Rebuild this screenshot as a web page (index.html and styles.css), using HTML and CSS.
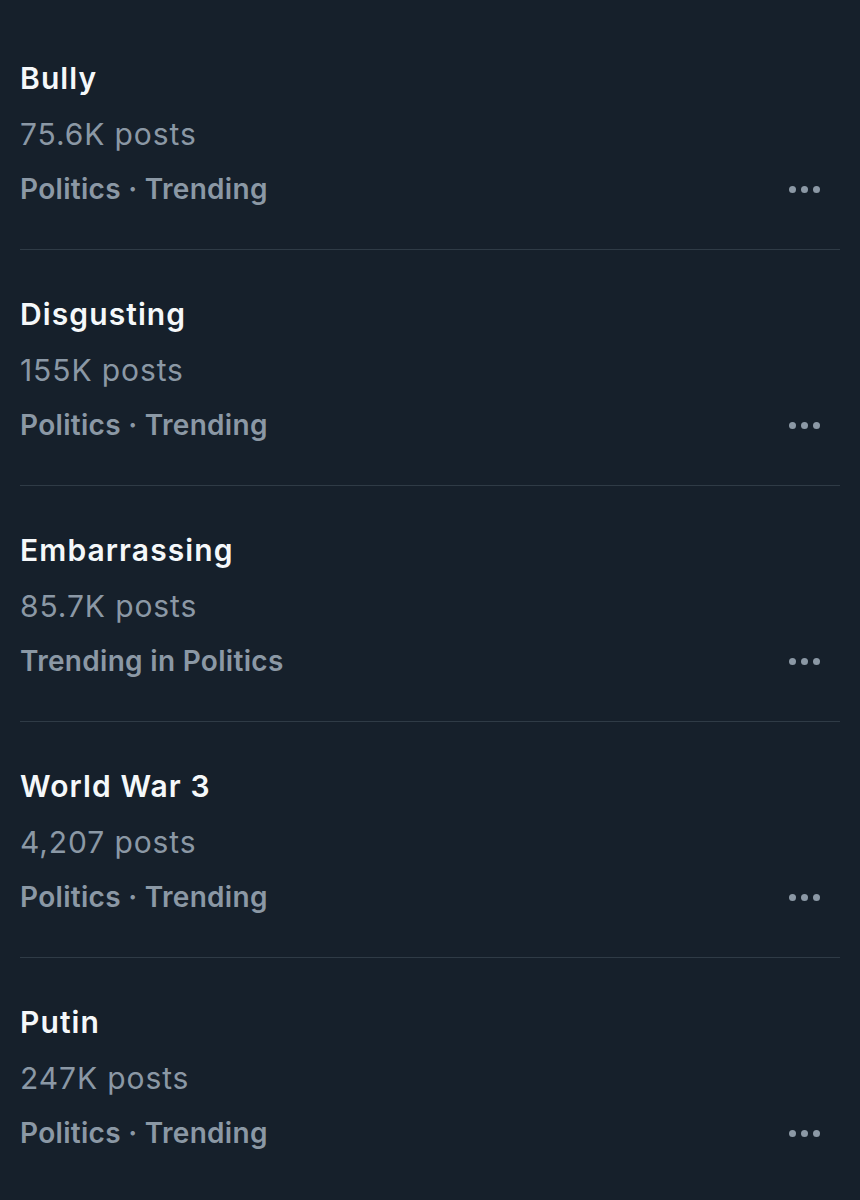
FILE: index.html
```html
<!DOCTYPE html>
<html>
<head>
  <meta charset="utf-8">
  <title>Trends</title>
  <link rel="stylesheet" href="styles.css">
</head>
<body>
  <div class="trends">

    <div class="trend">
      <div class="trend-text">
        <div class="topic">Bully</div>
        <div class="count">75.6K posts</div>
        <div class="context">Politics · Trending</div>
      </div>
      <div class="more"><span></span><span></span><span></span></div>
    </div>

    <div class="trend">
      <div class="trend-text">
        <div class="topic">Disgusting</div>
        <div class="count">155K posts</div>
        <div class="context">Politics · Trending</div>
      </div>
      <div class="more"><span></span><span></span><span></span></div>
    </div>

    <div class="trend">
      <div class="trend-text">
        <div class="topic">Embarrassing</div>
        <div class="count">85.7K posts</div>
        <div class="context">Trending in Politics</div>
      </div>
      <div class="more"><span></span><span></span><span></span></div>
    </div>

    <div class="trend">
      <div class="trend-text">
        <div class="topic">World War 3</div>
        <div class="count">4,207 posts</div>
        <div class="context">Politics · Trending</div>
      </div>
      <div class="more"><span></span><span></span><span></span></div>
    </div>

    <div class="trend">
      <div class="trend-text">
        <div class="topic">Putin</div>
        <div class="count">247K posts</div>
        <div class="context">Politics · Trending</div>
      </div>
      <div class="more"><span></span><span></span><span></span></div>
    </div>

  </div>
</body>
</html>
```

FILE: styles.css
```css
body {
  margin: 0;
  padding-top: 14px;
  background-color: #16202b;
  font-family: Inter, "Noto Sans", sans-serif;
  -webkit-font-smoothing: antialiased;
}

.trends {
  padding: 0 20px;
}

.trend {
  display: flex;
  align-items: flex-end;
  padding: 46px 0 42px 0;
  border-bottom: 1px solid #2f3b46;
}

.trend:last-child {
  border-bottom: none;
}

.trend-text {
  flex: 1;
}

.topic {
  color: #f5f8fa;
  font-size: 30px;
  font-weight: 600;
  line-height: 36px;
  letter-spacing: 1.1px;
}

.count {
  color: #8b98a5;
  font-size: 30px;
  font-weight: 400;
  line-height: 36px;
  letter-spacing: 0.9px;
  margin-top: 20px;
}

.context {
  color: #8b98a5;
  font-size: 28px;
  font-weight: 600;
  line-height: 36px;
  letter-spacing: 0.3px;
  margin-top: 19px;
}

/* three-dot overflow button */
.more {
  display: flex;
  gap: 5px;
  height: 36px;
  align-items: center;
  margin-right: 20px;
}

.more span {
  width: 7px;
  height: 7px;
  border-radius: 50%;
  background-color: #8b98a5;
}
```
